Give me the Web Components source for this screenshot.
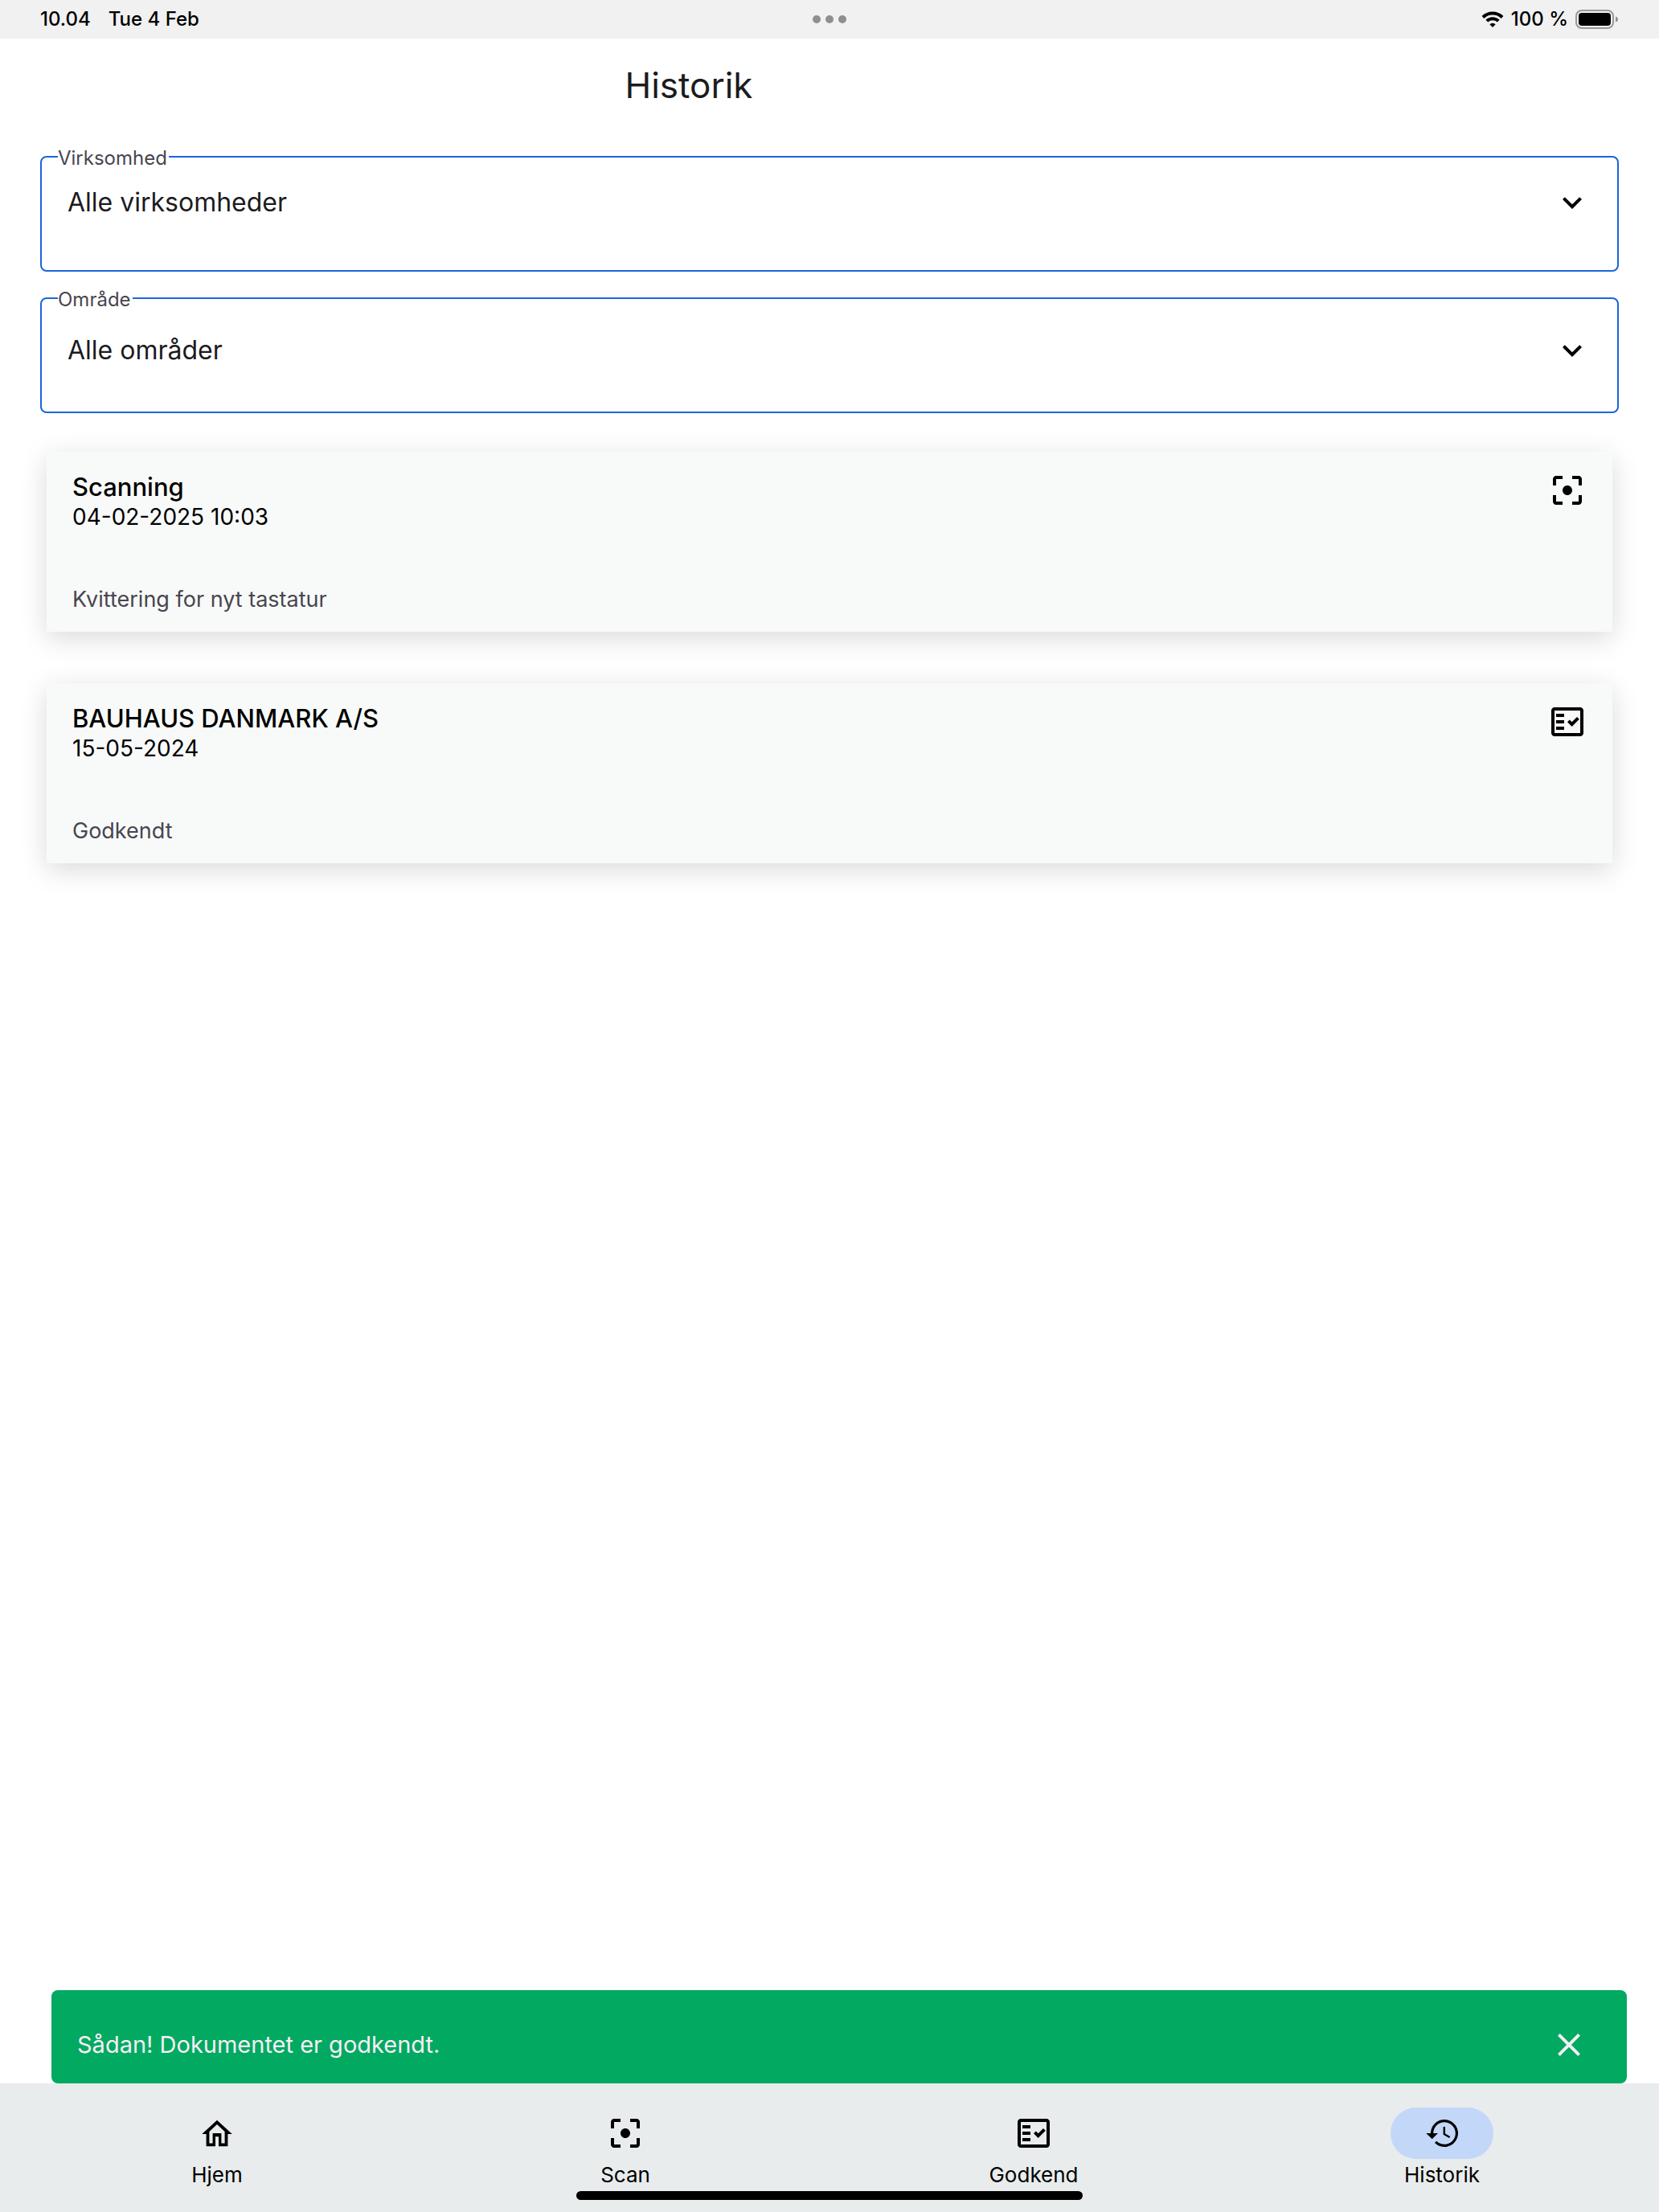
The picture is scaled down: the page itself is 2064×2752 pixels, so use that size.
<!DOCTYPE html>
<html lang="da">
<head>
<meta charset="utf-8">
<title>Historik</title>
<style>
html, body { margin: 0; height: 100%; }
body { background: #fff; font-family: Inter, "Liberation Sans", sans-serif; color: #1c1b1f; }
</style>
</head>
<body>
<history-app></history-app>
<script>
const define = (name, html, setup) => {
  const tpl = document.createElement('template');
  tpl.innerHTML = html;
  customElements.define(name, class extends HTMLElement {
    connectedCallback() {
      if (this.shadowRoot) return;
      const root = this.attachShadow({ mode: 'open' });
      root.append(tpl.content.cloneNode(true));
      if (setup) setup(this, root);
    }
  });
};

const ICONS = {
  chevron: 'M7.41 8.59 12 13.17l4.59-4.58L18 10l-6 6-6-6z',
  close: 'M19 6.41 17.59 5 12 10.59 6.41 5 5 6.41 10.59 12 5 17.59 6.41 19 12 13.41 17.59 19 19 17.59 13.41 12z',
  scan: 'M5 15H3v4c0 1.1.9 2 2 2h4v-2H5v-4zM5 5h4V3H5c-1.1 0-2 .9-2 2v4h2V5zm14-2h-4v2h4v4h2V5c0-1.1-.9-2-2-2zm0 16h-4v2h4c1.1 0 2-.9 2-2v-4h-2v4zM12 9c-1.66 0-3 1.34-3 3s1.34 3 3 3 3-1.34 3-3-1.34-3-3-3z',
  check: 'M20 3H4c-1.1 0-2 .9-2 2v14c0 1.1.9 2 2 2h16c1.1 0 2-.9 2-2V5c0-1.1-.9-2-2-2zm0 16H4V5h16v14zM19.41 10.42 17.99 9l-3.17 3.17-1.41-1.42L12 12.16 14.82 15zM5 7h5v2H5zM5 11h5v2H5zM5 15h5v2H5z',
  home: 'M12 3.900L2.600 12.500h2.700v7.600H11v-6h2v6h5.700v-7.600h2.700zM12 6.500l4.800 4.500v7.300h-2.100V12H9.300v6.300H7.200V11z',
  history: 'M13.500 3.500A8.500 8.500 0 0 0 5 12H2.150L5.850 15.600 9.500 12H6.600A6.900 6.900 0 1 1 8.620 16.880L7.490 18.010A8.500 8.500 0 1 0 13.500 3.500zM12.800 8v4.900l3.700 2.100.6-1-3.100-1.800V8z'
};

define('app-icon', `
<style>
:host { display: block; flex: none; width: 48px; height: 48px; }
svg { display: block; width: 100%; height: 100%; fill: currentColor; }
</style>
<svg viewBox="0 0 24 24" aria-hidden="true"><path fill-rule="evenodd"/></svg>`,
(el, root) => root.querySelector('path').setAttribute('d', ICONS[el.getAttribute('name')]));

define('status-bar', `
<style>
:host { display: grid; grid-template-columns: 1fr auto 1fr; align-items: center; height: 48px; padding: 0 50px;
  background: #f1f1f1; color: #000; font-size: 24px; font-weight: 500; line-height: 28px; }
.left, .right, .dots { display: flex; align-items: center; }
.left { gap: 22px; }
.right { justify-content: flex-end; gap: 9px; }
.dots { gap: 6px; }
.dots i { width: 10px; height: 10px; border-radius: 50%; background: #8f8f8f; }
svg { display: block; }
</style>
<div class="left"><span>10.04</span><span>Tue 4 Feb</span></div>
<div class="dots"><i></i><i></i><i></i></div>
<div class="right">
  <svg width="28" height="20" viewBox="0 0 28 20" fill="none" stroke="#000" stroke-width="4">
    <path d="M2 7.500a17 17 0 0 1 24 0"/><path d="M6.800 12.200a10.200 10.200 0 0 1 14.400 0"/>
    <path d="M14 20l-3.700-3.700a5.200 5.200 0 0 1 7.400 0z" fill="#000" stroke="none"/>
  </svg>
  <span>100 %</span>
  <svg width="54" height="24" viewBox="0 0 54 24">
    <rect x="1" y="1" width="46" height="22" rx="7" fill="none" stroke="#999" stroke-width="2"/>
    <rect x="4" y="4" width="40" height="16" rx="4" fill="#000"/>
    <path d="M50 8.500c4 1 4 6 0 7z" fill="#8f8f8f"/>
  </svg>
</div>`);

define('select-field', `
<style>
:host { display: block; }
fieldset { margin: 0; border: 2px solid #1a66db; border-radius: 8px; padding: 0 0 0 20px; min-width: 0; }
legend { padding: 4px 2px 0 0; font-size: 24px; line-height: 28px; color: #49454f; }
legend label { display: block; }
.row { display: grid; align-items: center; height: 125px; padding-bottom: 27px; box-sizing: border-box; }
:host([compact]) .row { padding-bottom: 43px; }
select, app-icon { grid-area: 1 / 1; }
select { appearance: none; border: 0; background: none; margin: 0; padding: 0 80px 0 12px; width: 100%; height: 64px;
  font: 400 32px/40px Inter, "Liberation Sans", sans-serif; color: #1c1b1f; outline: 0; }
app-icon { justify-self: end; margin-right: 32px; color: #000; pointer-events: none; }
</style>
<fieldset>
  <legend><label for="field"></label></legend>
  <div class="row"><select id="field"><option></option></select><app-icon name="chevron"></app-icon></div>
</fieldset>`,
(el, root) => {
  root.querySelector('label').textContent = el.getAttribute('label');
  root.querySelector('option').textContent = el.getAttribute('value');
});

define('history-card', `
<style>
:host { display: block; padding: 24px 32px; background: #f8faf9; box-shadow: 0 8px 32px rgba(0,0,0,.15); color: #000; }
.top { display: flex; justify-content: space-between; align-items: flex-start; }
h2, p { margin: 0; }
h2 { padding-bottom: 1px; font-size: 31px; line-height: 40px; font-weight: 500; }
.date { font-size: 28px; line-height: 32px; }
.note { padding-top: 71px; font-size: 27px; line-height: 32px; color: #49454f; }
</style>
<article>
  <div class="top">
    <div><h2><slot name="title"></slot></h2><p class="date"><slot name="date"></slot></p></div>
    <app-icon></app-icon>
  </div>
  <p class="note"><slot></slot></p>
</article>`,
(el, root) => {
  const icon = document.createElement('app-icon');
  icon.setAttribute('name', el.getAttribute('icon'));
  root.querySelector('app-icon').replaceWith(icon);
});

define('snack-bar', `
<style>
:host { display: flex; align-items: center; justify-content: space-between; height: 116px; box-sizing: border-box;
  margin: 0 40px 0 64px; padding: 20px 48px 0 32px; border-radius: 8px; background: #02a961; color: #f4eff4;
  font-size: 29px; line-height: 40px; }
button { appearance: none; border: 0; background: none; padding: 0; color: inherit; display: block; }
</style>
<span role="status"><slot></slot></span>
<button type="button" aria-label="Luk"><app-icon name="close"></app-icon></button>`);

define('nav-item', `
<style>
:host { display: block; flex: 1; }
a { display: flex; flex-direction: column; align-items: center; gap: 4px; color: #000; text-decoration: none;
  font-size: 26px; line-height: 32px; }
.pill { display: flex; align-items: center; justify-content: center; width: 128px; height: 64px; border-radius: 32px; }
:host([active]) .pill { background: #c3d7f8; }
</style>
<a href="#"><span class="pill"></span><slot></slot></a>`,
(el, root) => {
  const icon = document.createElement('app-icon');
  icon.setAttribute('name', el.getAttribute('icon'));
  root.querySelector('.pill').append(icon);
  if (el.hasAttribute('active')) root.querySelector('a').setAttribute('aria-current', 'page');
});

define('nav-bar', `
<style>
:host { display: block; position: relative; height: 160px; box-sizing: border-box; padding: 30px 16px 0; background: #e8ecec; }
nav { display: flex; }
.home { position: absolute; left: 0; right: 0; bottom: 15px; margin: auto; width: 630px; height: 11px; border-radius: 6px; background: #000; }
</style>
<nav><slot></slot></nav>
<div class="home"></div>`);

define('history-app', `
<style>
:host { display: flex; flex-direction: column; min-height: 100%; }
header { display: flex; align-items: center; height: 116px; padding: 0 350px 0 0; justify-content: center; }
h1 { margin: 0; font-size: 44px; line-height: 56px; font-weight: 400; }
main { flex: 1; display: flex; flex-direction: column; }
.filters { display: flex; flex-direction: column; gap: 17px; padding: 15px 50px 0; }
.cards { display: flex; flex-direction: column; gap: 64px; padding: 48px 58px 0; }
</style>
<status-bar></status-bar>
<header><h1>Historik</h1></header>
<main>
  <div class="filters">
    <select-field compact label="Virksomhed" value="Alle virksomheder"></select-field>
    <select-field label="Område" value="Alle områder"></select-field>
  </div>
  <div class="cards">
    <history-card icon="scan"><span slot="title">Scanning</span><span slot="date">04-02-2025 10:03</span>Kvittering for nyt tastatur</history-card>
    <history-card icon="check"><span slot="title">BAUHAUS DANMARK A/S</span><span slot="date">15-05-2024</span>Godkendt</history-card>
  </div>
</main>
<snack-bar>Sådan! Dokumentet er godkendt.</snack-bar>
<nav-bar>
  <nav-item icon="home">Hjem</nav-item>
  <nav-item icon="scan">Scan</nav-item>
  <nav-item icon="check">Godkend</nav-item>
  <nav-item icon="history" active>Historik</nav-item>
</nav-bar>`);
</script>
</body>
</html>
